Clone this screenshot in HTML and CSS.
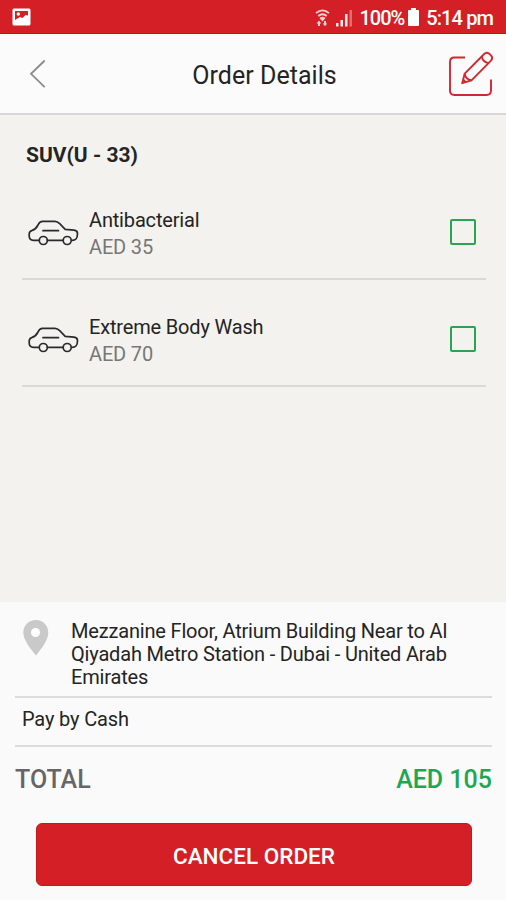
FILE: index.html
```html
<!DOCTYPE html>
<html lang="en">
<head>
    <meta charset="UTF-8">
    <meta name="viewport" content="width=device-width, initial-scale=1.0">
    <title>Order Details</title>
    <link rel="stylesheet" href="styles.css">
</head>
<body>
    <svg class="symbols" width="0" height="0">
        <symbol id="car" viewBox="0 0 52 28">
            <g fill="none" stroke="#2a2a2a" stroke-width="1.7" stroke-linejoin="round" stroke-linecap="round">
                <path d="M11 21.3H5.5C2.5 21.3 1.2 20 1.2 17v-2c0-2 1-3 3-3.6C7.500 10.300 8.500 9 10 6c1.200-2.600 2-3.700 4.500-3.700h12.500c2 0 3.200.8 4.700 2.300l5.500 5.700 8.800.9c2.600.3 3.500 1.300 3.500 3.300 0 2.500-.3 4.300-1.500 5.500-.9.900-2 1.300-4 1.300M19.500 21.300H35"/>
                <path d="M15 11.700h15.500"/>
                <circle cx="15.300" cy="21.500" r="4"/>
                <circle cx="39.200" cy="21.500" r="4"/>
            </g>
        </symbol>
    </svg>

    <div class="status-bar">
        <svg class="picture-icon" width="19" height="18" viewBox="0 0 19 18">
            <rect x=".5" y=".5" width="18" height="17" rx="1.500" fill="#fff"/>
            <path d="M3 3h13v4.500l-2.500-.5-3 3-2.500-1L3 12z" fill="#d31f26"/>
            <circle cx="6.300" cy="6" r="1.700" fill="#fff"/>
        </svg>
        <div class="status-right">
            <svg class="wifi" width="15" height="18" viewBox="0 0 15 18">
                <g fill="none" stroke="#f6cfd0" stroke-width="1.800">
                    <path d="M1 4.200c4-3.600 9-3.600 13 0M3.200 7c2.800-2.300 5.800-2.300 8.600 0M5.200 9.500c1.600-1.200 3-1.200 4.600 0"/>
                </g>
                <path d="M4.500 9h6L7.500 12.500z" fill="#f6cfd0"/>
                <path d="M1.500 14.500L4 11.500l2.300 3H5V17H3v-2.500zM9 12h2v2.500h1.300L10 17.300 7.700 14.500H9z" fill="#f6cfd0"/>
            </svg>
            <svg class="signal" width="17" height="18" viewBox="0 0 17 18">
                <path d="M0 14h2.500v3.500H0zM4.500 11H7v6.500H4.500zM9 5h2.500v12.500H9z" fill="#fff" opacity=".9"/>
                <path d="M13.500 1H16v16.500h-2.500z" fill="#fff" opacity=".35"/>
            </svg>
            <span class="percent">100%</span>
            <svg class="battery" width="11" height="18" viewBox="0 0 11 18">
                <path d="M3 0h5v2h2.200c.5 0 .8.300.8.800V17c0 .6-.3 1-.8 1H.8c-.5 0-.8-.4-.8-1V2.800C0 2.300.3 2 .8 2H3z" fill="#fff"/>
            </svg>
            <span class="time">5:14 pm</span>
        </div>
    </div>

    <header class="header">
        <svg class="back" width="18" height="30" viewBox="0 0 18 30">
            <path d="M15.700 1.500L2 14.800l13.700 13.400" fill="none" stroke="#8b8b8b" stroke-width="1.800"/>
        </svg>
        <h1 class="title">Order Details</h1>
        <svg class="edit" width="48" height="48" viewBox="0 0 48 48">
            <g fill="none" stroke="#cf2930" stroke-width="1.900" stroke-linejoin="round">
                <path d="M18 7.500H7.500c-3 0-4.500 1.500-4.500 4.500v28.500c0 3 1.500 4.500 4.500 4.500h32c3 0 4.500-1.500 4.500-4.500V29.500"/>
                <path d="M15.200 33.200l2.500-9.500L37.200 4c1.300-1.300 3.400-1.500 5-.3l2 2c1.300 1.500 1.200 3.400-.2 4.900L24.500 30.300z"/>
                <path d="M34.700 6.500c.8 3.500 3.500 6.100 6.900 6.600M17.700 23.700c.5 3.500 3.200 6.200 6.800 6.600M16 29.500c1 .6 2 1.600 2.500 2.700"/>
            </g>
        </svg>
    </header>

    <main class="order">
        <h2 class="vehicle">SUV(U - 33)</h2>
        <div class="item">
            <svg class="car" width="52" height="28"><use href="#car"/></svg>
            <div class="item-text">
                <div class="item-name">Antibacterial</div>
                <div class="item-price">AED 35</div>
            </div>
            <div class="checkbox"></div>
        </div>
        <div class="item">
            <svg class="car" width="52" height="28"><use href="#car"/></svg>
            <div class="item-text">
                <div class="item-name">Extreme Body Wash</div>
                <div class="item-price">AED 70</div>
            </div>
            <div class="checkbox"></div>
        </div>
    </main>

    <footer class="summary">
        <div class="address">
            <svg class="pin" width="26" height="36" viewBox="0 0 26 36">
                <path d="M13 0C5.600 0 .3 5.500.3 12.500.3 20 7 28 13 35.500 19 28 25.300 20 25.300 12.500 25.300 5.500 20 0 13 0z" fill="#c9c9c9"/>
                <circle cx="12.500" cy="12.500" r="4.500" fill="#fff"/>
            </svg>
            <p class="address-text">Mezzanine Floor, Atrium Building Near to Al<br>Qiyadah Metro Station - Dubai - United Arab<br>Emirates</p>
        </div>
        <div class="payment">Pay by Cash</div>
        <div class="total">
            <span class="total-label">TOTAL</span>
            <span class="total-value">AED 105</span>
        </div>
        <button class="cancel">CANCEL ORDER</button>
    </footer>
</body>
</html>
```
FILE: styles.css
```css
* {
    box-sizing: border-box;
}

body {
    margin: 0;
    height: 900px;
    display: flex;
    flex-direction: column;
    overflow: hidden;
    font-family: Roboto, sans-serif;
    color: #242424;
    background: #fafafa;
    white-space: nowrap;
}

h1, h2, p {
    margin: 0;
    font-weight: 400;
}

svg {
    display: block;
    flex: none;
}

.symbols {
    position: absolute;
}

.status-bar {
    height: 34px;
    flex: none;
    display: flex;
    justify-content: space-between;
    padding: 0 13px 0 12px;
    background: #d41f26;
    border-bottom: 1px solid #c4141a;
    color: #fff;
}

.picture-icon {
    margin-top: 8px;
}

.status-right {
    display: flex;
    align-items: center;
    padding-top: 2px;
    font-size: 20px;
    font-weight: 500;
    letter-spacing: -1px;
}

.time {
    letter-spacing: -0.9px;
}

.signal {
    margin: 0 6px 0 6px;
}

.battery {
    margin: 0 7px 2px 4px;
}

.header {
    height: 81px;
    flex: none;
    display: grid;
    grid-template-columns: 60px 1fr 60px;
    align-items: center;
    background: #fbfbfb;
    border-bottom: 2px solid #d8d8d6;
}

.back {
    margin-left: 29px;
}

.title {
    padding: 3px 0 0 23px;
    text-align: center;
    font-size: 25px;
    letter-spacing: 0.05px;
}

.edit {
    justify-self: end;
    margin-right: 11px;
}

.order {
    height: 487px;
    flex: none;
    padding: 25px 20px 0 22px;
    background: #f3f2ee;
}

.vehicle {
    height: 33px;
    padding-left: 4px;
    font-size: 21px;
    font-weight: 700;
    line-height: 30px;
}

.item {
    height: 107px;
    display: flex;
    padding: 32px 10px 0 6px;
    border-bottom: 2px solid #dad9d6;
}

.car {
    margin-top: 14px;
}

.item-text {
    flex: 1;
    padding: 2px 0 0 9px;
    font-size: 20px;
    line-height: 27px;
    letter-spacing: -0.17px;
}

.item-price {
    color: #777;
}

.checkbox {
    width: 26px;
    height: 26px;
    margin-top: 14px;
    border: 2px solid #2ba350;
    border-radius: 2px;
}

.summary {
    flex: 1;
    padding: 0 14px 0 15px;
    background: #fafafa;
}

.address {
    height: 96px;
    display: flex;
    padding: 18px 0 0 8px;
    border-bottom: 2px solid #dcdcdc;
}

.address-text {
    padding-left: 22px;
    font-size: 20px;
    line-height: 23px;
    letter-spacing: -0.18px;
}

.payment {
    height: 49px;
    padding-left: 7px;
    font-size: 20px;
    line-height: 43px;
    letter-spacing: -0.15px;
    border-bottom: 2px solid #dcdcdc;
}

.total {
    height: 76px;
    display: flex;
    justify-content: space-between;
    font-size: 25px;
    font-weight: 500;
    line-height: 66px;
}

.total-label {
    color: #666;
}

.total-value {
    color: #1fa750;
}

.cancel {
    display: block;
    width: 436px;
    height: 63px;
    margin: 0 0 0 21px;
    padding: 2px 0 0;
    border: 1px solid #c8161d;
    border-radius: 6px;
    background: #d41f26;
    color: #fff;
    font-family: inherit;
    font-size: 22.5px;
    font-weight: 500;
}
```
